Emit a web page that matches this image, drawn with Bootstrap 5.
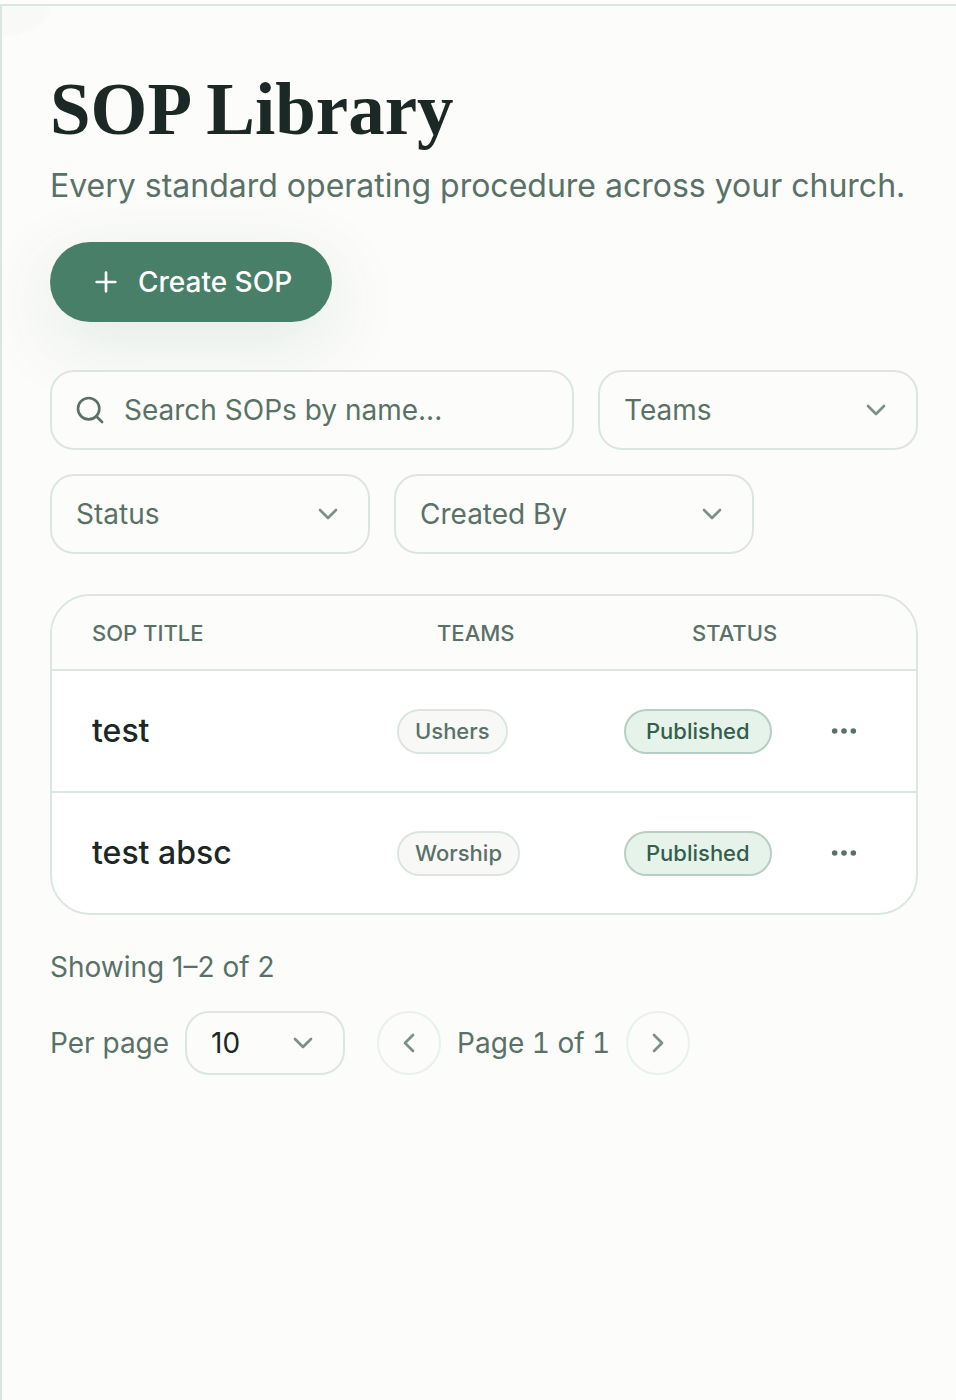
<!DOCTYPE html>
<html lang="en">
<head>
  <meta charset="UTF-8" />
  <meta name="viewport" content="width=device-width, initial-scale=1.0" />
  <title>SOP Library</title>
  <link href="https://cdn.jsdelivr.net/npm/bootstrap@5.3.0/dist/css/bootstrap.min.css" rel="stylesheet" />
  <style>
    :root {
      --ink: #1b2825;
      --soft: #5a7168;
      --line: #dce6e1;
      --paper: #fcfcfa;
    }

    body {
      background-color: var(--paper);
      color: var(--soft);
      font-family: Inter, "Liberation Sans", sans-serif;
      font-size: 28px;
      line-height: 40px;
      padding-top: 4px;
    }

    .library {
      min-height: calc(100vh - 4px);
      border-top: 2px solid var(--line);
      border-left: 2px solid var(--line);
      padding: 60px 38px 60px 48px;
      background: radial-gradient(ellipse 50px 32px at 0 0, #f9faf8 90%, transparent) no-repeat;
    }

    .library h1 {
      color: var(--ink);
      font-family: "Liberation Serif", serif;
      font-size: 73px;
      font-weight: 700;
      line-height: 88px;
      margin-bottom: 8px;
    }

    .subtitle {
      font-size: 32px;
      line-height: 48px;
      margin-bottom: 32px;
    }

    .btn-create {
      height: 80px;
      padding: 0 40px;
      border: 0;
      border-radius: 40px;
      background-color: #487f69;
      color: #fff;
      font-size: 28px;
      font-weight: 500;
      box-shadow: 0 20px 72px rgba(72, 127, 105, 0.14);
    }

    .btn-create:hover {
      background-color: #3d6f5b;
      color: #fff;
    }

    .icon {
      width: 32px;
      height: 32px;
      flex-shrink: 0;
      fill: none;
      stroke: currentColor;
      stroke-width: 2;
      stroke-linecap: round;
      stroke-linejoin: round;
    }

    .filters {
      position: relative;
      gap: 24px;
      margin-bottom: 40px;
    }

    .field {
      height: 80px;
      border: 2px solid var(--line);
      border-radius: 24px;
      background-color: var(--paper);
      color: var(--soft);
      font-size: 28px;
    }

    .search-field {
      flex: 1 1 400px;
      gap: 18px;
      padding: 0 22px;
    }

    .search-field input {
      font-size: 28px;
      color: var(--ink);
    }

    .search-field input::placeholder {
      color: var(--soft);
      opacity: 1;
    }

    .form-select.field {
      width: 320px;
      padding: 0 64px 0 24px;
      background-image: url("data:image/svg+xml,%3csvg xmlns='http://www.w3.org/2000/svg' viewBox='0 0 24 24' fill='none' stroke='%237b9188' stroke-width='2' stroke-linecap='round' stroke-linejoin='round'%3e%3cpath d='m6 9 6 6 6-6'/%3e%3c/svg%3e");
      background-position: right 24px center;
      background-size: 32px 32px;
    }

    .form-select.field-wide {
      width: 360px;
    }

    .form-select.field-short {
      width: 160px;
      height: 64px;
      color: var(--ink);
    }

    .sop-card {
      border: 2px solid var(--line);
      border-radius: 40px;
      background-color: #fff;
      margin-bottom: 32px;
    }

    .sop-table {
      table-layout: fixed;
      border-collapse: separate;
      border-spacing: 0;
    }

    .sop-table th,
    .sop-table td {
      padding: 0;
      border-bottom: 2px solid var(--line);
      text-align: left;
      vertical-align: middle;
    }

    .sop-table thead th {
      height: 75px;
      background-color: var(--paper);
      color: var(--soft);
      font-size: 22px;
      font-weight: 500;
    }

    .sop-table tbody tr > * {
      height: 122px;
    }

    .sop-table tbody tr:last-child > * {
      height: 120px;
      border-bottom: 0;
    }

    .sop-table tr > :first-child {
      padding-left: 40px;
    }

    .sop-table thead .th-teams {
      padding-left: 40px;
    }

    .sop-table thead .th-status {
      padding-left: 68px;
    }

    .sop-table tbody th {
      color: var(--ink);
      font-size: 32px;
      font-weight: 500;
    }

    .col-teams { width: 227px; }
    .col-status { width: 188px; }
    .col-menu { width: 104px; }

    .pill {
      display: inline-block;
      padding: 4px 16px;
      border: 2px solid var(--line);
      border-radius: 24px;
      background-color: #f8f8f6;
      font-size: 22px;
      font-weight: 500;
      line-height: 33px;
      vertical-align: middle;
    }

    .pill-published {
      padding: 4px 20px;
      border-color: #b8cec4;
      background-color: #e6f3eb;
      color: #355e4c;
    }

    .btn-menu {
      width: 64px;
      height: 64px;
      color: var(--soft);
    }

    .btn-page {
      width: 64px;
      height: 64px;
      border: 2px solid #e8f1ed;
      color: var(--soft);
    }

    .btn-page:disabled {
      border-color: #e8f1ed;
      color: #7b9188;
      opacity: 1;
    }

    .showing { margin-bottom: 24px; }
    .pager { gap: 16px 32px; }
    .pager-group { gap: 16px; }
    .page-label { font-variant-numeric: tabular-nums; }
  </style>
</head>
<body>

  <main class="library">
    <header>
      <h1>SOP Library</h1>
      <p class="subtitle">Every standard operating procedure across your church.</p>
    </header>

    <button type="button" class="btn btn-create d-flex align-items-center gap-3 mb-5">
      <svg class="icon" viewBox="0 0 24 24" aria-hidden="true"><path d="M5 12h14M12 5v14" /></svg>
      Create SOP
    </button>

    <form class="filters d-flex flex-wrap">
      <label class="field search-field d-flex align-items-center">
        <svg class="icon" viewBox="0 0 24 24" aria-hidden="true"><circle cx="11" cy="11" r="8" /><path d="m21 21-4.3-4.3" /></svg>
        <input type="search" class="form-control border-0 bg-transparent shadow-none p-0" placeholder="Search SOPs by name..." aria-label="Search SOPs by name" />
      </label>
      <select class="form-select field" aria-label="Teams">
        <option>Teams</option>
        <option>Ushers</option>
        <option>Worship</option>
      </select>
      <select class="form-select field" aria-label="Status">
        <option>Status</option>
        <option>Published</option>
      </select>
      <select class="form-select field field-wide" aria-label="Created By">
        <option>Created By</option>
      </select>
    </form>

    <div class="sop-card overflow-hidden">
      <table class="sop-table w-100">
        <colgroup>
          <col />
          <col class="col-teams" />
          <col class="col-status" />
          <col class="col-menu" />
        </colgroup>
        <thead>
          <tr>
            <th scope="col">SOP TITLE</th>
            <th scope="col" class="th-teams">TEAMS</th>
            <th scope="col" class="th-status">STATUS</th>
            <th scope="col" aria-label="Actions"></th>
          </tr>
        </thead>
        <tbody>
          <tr>
            <th scope="row">test</th>
            <td><span class="pill">Ushers</span></td>
            <td><span class="pill pill-published">Published</span></td>
            <td>
              <button type="button" class="btn btn-menu d-flex align-items-center justify-content-center p-0 border-0" aria-label="Actions for test">
                <svg class="icon" viewBox="0 0 24 24" aria-hidden="true"><g fill="currentColor" stroke="none"><circle cx="5" cy="12" r="2.1" /><circle cx="12" cy="12" r="2.1" /><circle cx="19" cy="12" r="2.1" /></g></svg>
              </button>
            </td>
          </tr>
          <tr>
            <th scope="row">test absc</th>
            <td><span class="pill">Worship</span></td>
            <td><span class="pill pill-published">Published</span></td>
            <td>
              <button type="button" class="btn btn-menu d-flex align-items-center justify-content-center p-0 border-0" aria-label="Actions for test absc">
                <svg class="icon" viewBox="0 0 24 24" aria-hidden="true"><g fill="currentColor" stroke="none"><circle cx="5" cy="12" r="2.1" /><circle cx="12" cy="12" r="2.1" /><circle cx="19" cy="12" r="2.1" /></g></svg>
              </button>
            </td>
          </tr>
        </tbody>
      </table>
    </div>

    <p class="showing">Showing 1–2 of 2</p>

    <div class="pager d-flex flex-wrap align-items-center">
      <div class="pager-group d-flex align-items-center">
        <label for="perPage">Per page</label>
        <select id="perPage" class="form-select field field-short">
          <option>10</option>
          <option>25</option>
          <option>50</option>
        </select>
      </div>
      <nav class="pager-group d-flex align-items-center" aria-label="Pages">
        <button type="button" class="btn btn-page rounded-circle d-flex align-items-center justify-content-center p-0" aria-label="Previous page" disabled>
          <svg class="icon" viewBox="0 0 24 24" aria-hidden="true"><path d="m15 18-6-6 6-6" /></svg>
        </button>
        <span class="page-label">Page 1 of 1</span>
        <button type="button" class="btn btn-page rounded-circle d-flex align-items-center justify-content-center p-0" aria-label="Next page" disabled>
          <svg class="icon" viewBox="0 0 24 24" aria-hidden="true"><path d="m9 18 6-6-6-6" /></svg>
        </button>
      </nav>
    </div>
  </main>

  <script src="https://cdn.jsdelivr.net/npm/bootstrap@5.3.0/dist/js/bootstrap.bundle.min.js"></script>
</body>
</html>
